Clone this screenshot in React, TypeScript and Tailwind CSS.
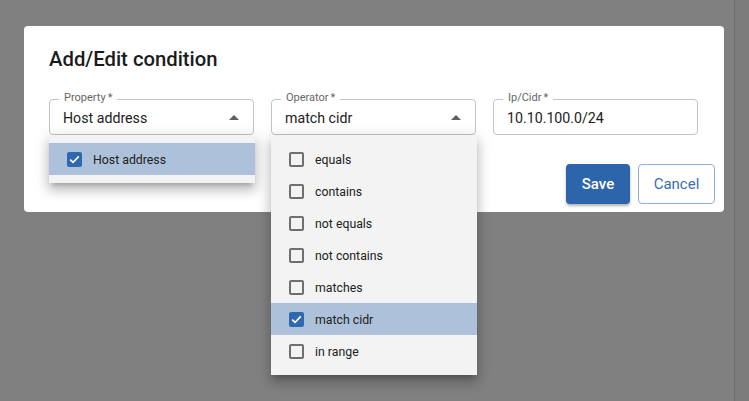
import React from "react";

const Caret = () => (
  <svg width="10" height="5" viewBox="0 0 10 5" className="shrink-0">
    <path d="M0 5 L5 0 L10 5 Z" fill="#5f5f5f" />
  </svg>
);

const Box = ({ checked }: { checked: boolean }) =>
  checked ? (
    <span className="w-[15px] h-[15px] rounded-[2px] bg-[#2f68ae] flex items-center justify-center shrink-0">
      <svg width="11" height="9" viewBox="0 0 11 9">
        <path d="M1.2 4.6 L4.1 7.4 L9.8 1.4" fill="none" stroke="#ffffff" strokeWidth="1.6" />
      </svg>
    </span>
  ) : (
    <span className="w-[15px] h-[15px] rounded-[2px] border-2 border-[#6f6f6f] shrink-0" />
  );

const Field = ({ label, value, select }: { label: string; value: string; select?: boolean }) => (
  <div className="relative w-[205px] h-[36px] border border-[#c4c4c4] rounded-[4px] flex items-center pl-[13px] pr-[14px]">
    <span className="absolute left-[9px] top-[-8px] px-[5px] bg-white text-[11px] leading-[12px] text-[#666666]">
      {label}
      <span className="ml-[2px]">*</span>
    </span>
    <span className="flex-1 text-[14.2px] leading-[20px] text-[#212121] pt-[1px]">{value}</span>
    {select && <Caret />}
  </div>
);

const Item = ({ text, checked }: { text: string; checked?: boolean }) => (
  <div className={`h-[32px] flex items-center pl-[18px] gap-[11px] ${checked ? "bg-[#adc1da]" : ""}`}>
    <Box checked={!!checked} />
    <span className="text-[12.3px] leading-[16px] text-[#212121] pt-[1px]">{text}</span>
  </div>
);

export default function App() {
  const ops = ["equals", "contains", "not equals", "not contains", "matches", "match cidr", "in range"];
  return (
    <div
      className="w-[749px] h-[401px] bg-[#808080] flex overflow-hidden"
      style={{ fontFamily: "Roboto, 'Noto Sans', sans-serif" }}
    >
      <div className="flex-1 pl-[24px] pt-[26px]">
        <div className="relative w-[700px] h-[186px] bg-white rounded-[4px] pl-[25px] pt-[17px] pr-[9px]">
          <div className="text-[20.3px] leading-[32px] font-medium text-[#1b1b1b]">Add/Edit condition</div>
          <div className="mt-[24px] flex gap-[17px]">
            <div className="relative">
              <Field label="Property" value="Host address" select />
              <div className="absolute left-0 top-[36px] w-[206px] bg-[#f3f3f3] py-[8px] shadow-[0_5px_5px_-3px_rgba(0,0,0,0.2),0_8px_10px_1px_rgba(0,0,0,0.14),0_3px_14px_2px_rgba(0,0,0,0.12)] z-10">
                <Item text="Host address" checked />
              </div>
            </div>
            <div className="relative">
              <Field label="Operator" value="match cidr" select />
              <div className="absolute left-0 top-[36px] w-[206px] bg-[#f3f3f3] py-[8px] shadow-[0_5px_5px_-3px_rgba(0,0,0,0.2),0_8px_10px_1px_rgba(0,0,0,0.14),0_3px_14px_2px_rgba(0,0,0,0.12)] z-10">
                {ops.map((o) => (
                  <Item key={o} text={o} checked={o === "match cidr"} />
                ))}
              </div>
            </div>
            <Field label="Ip/Cidr" value="10.10.100.0/24" />
          </div>
          <div className="mt-[29px] flex justify-end gap-[8px]">
            <button className="w-[64px] h-[40px] rounded-[4px] bg-[#2c65aa] text-white text-[15px] font-medium shadow-[0_2px_3px_rgba(0,0,0,0.3)] pt-[1px]">
              Save
            </button>
            <button className="w-[77px] h-[40px] rounded-[4px] bg-white border border-[#8fb0d8] text-[#3a6db0] text-[15px] pt-[1px]">
              Cancel
            </button>
          </div>
        </div>
      </div>
      <div className="w-[15px] h-full border-l border-[#6e6e6e] bg-[#7c7c7c]" />
    </div>
  );
}
